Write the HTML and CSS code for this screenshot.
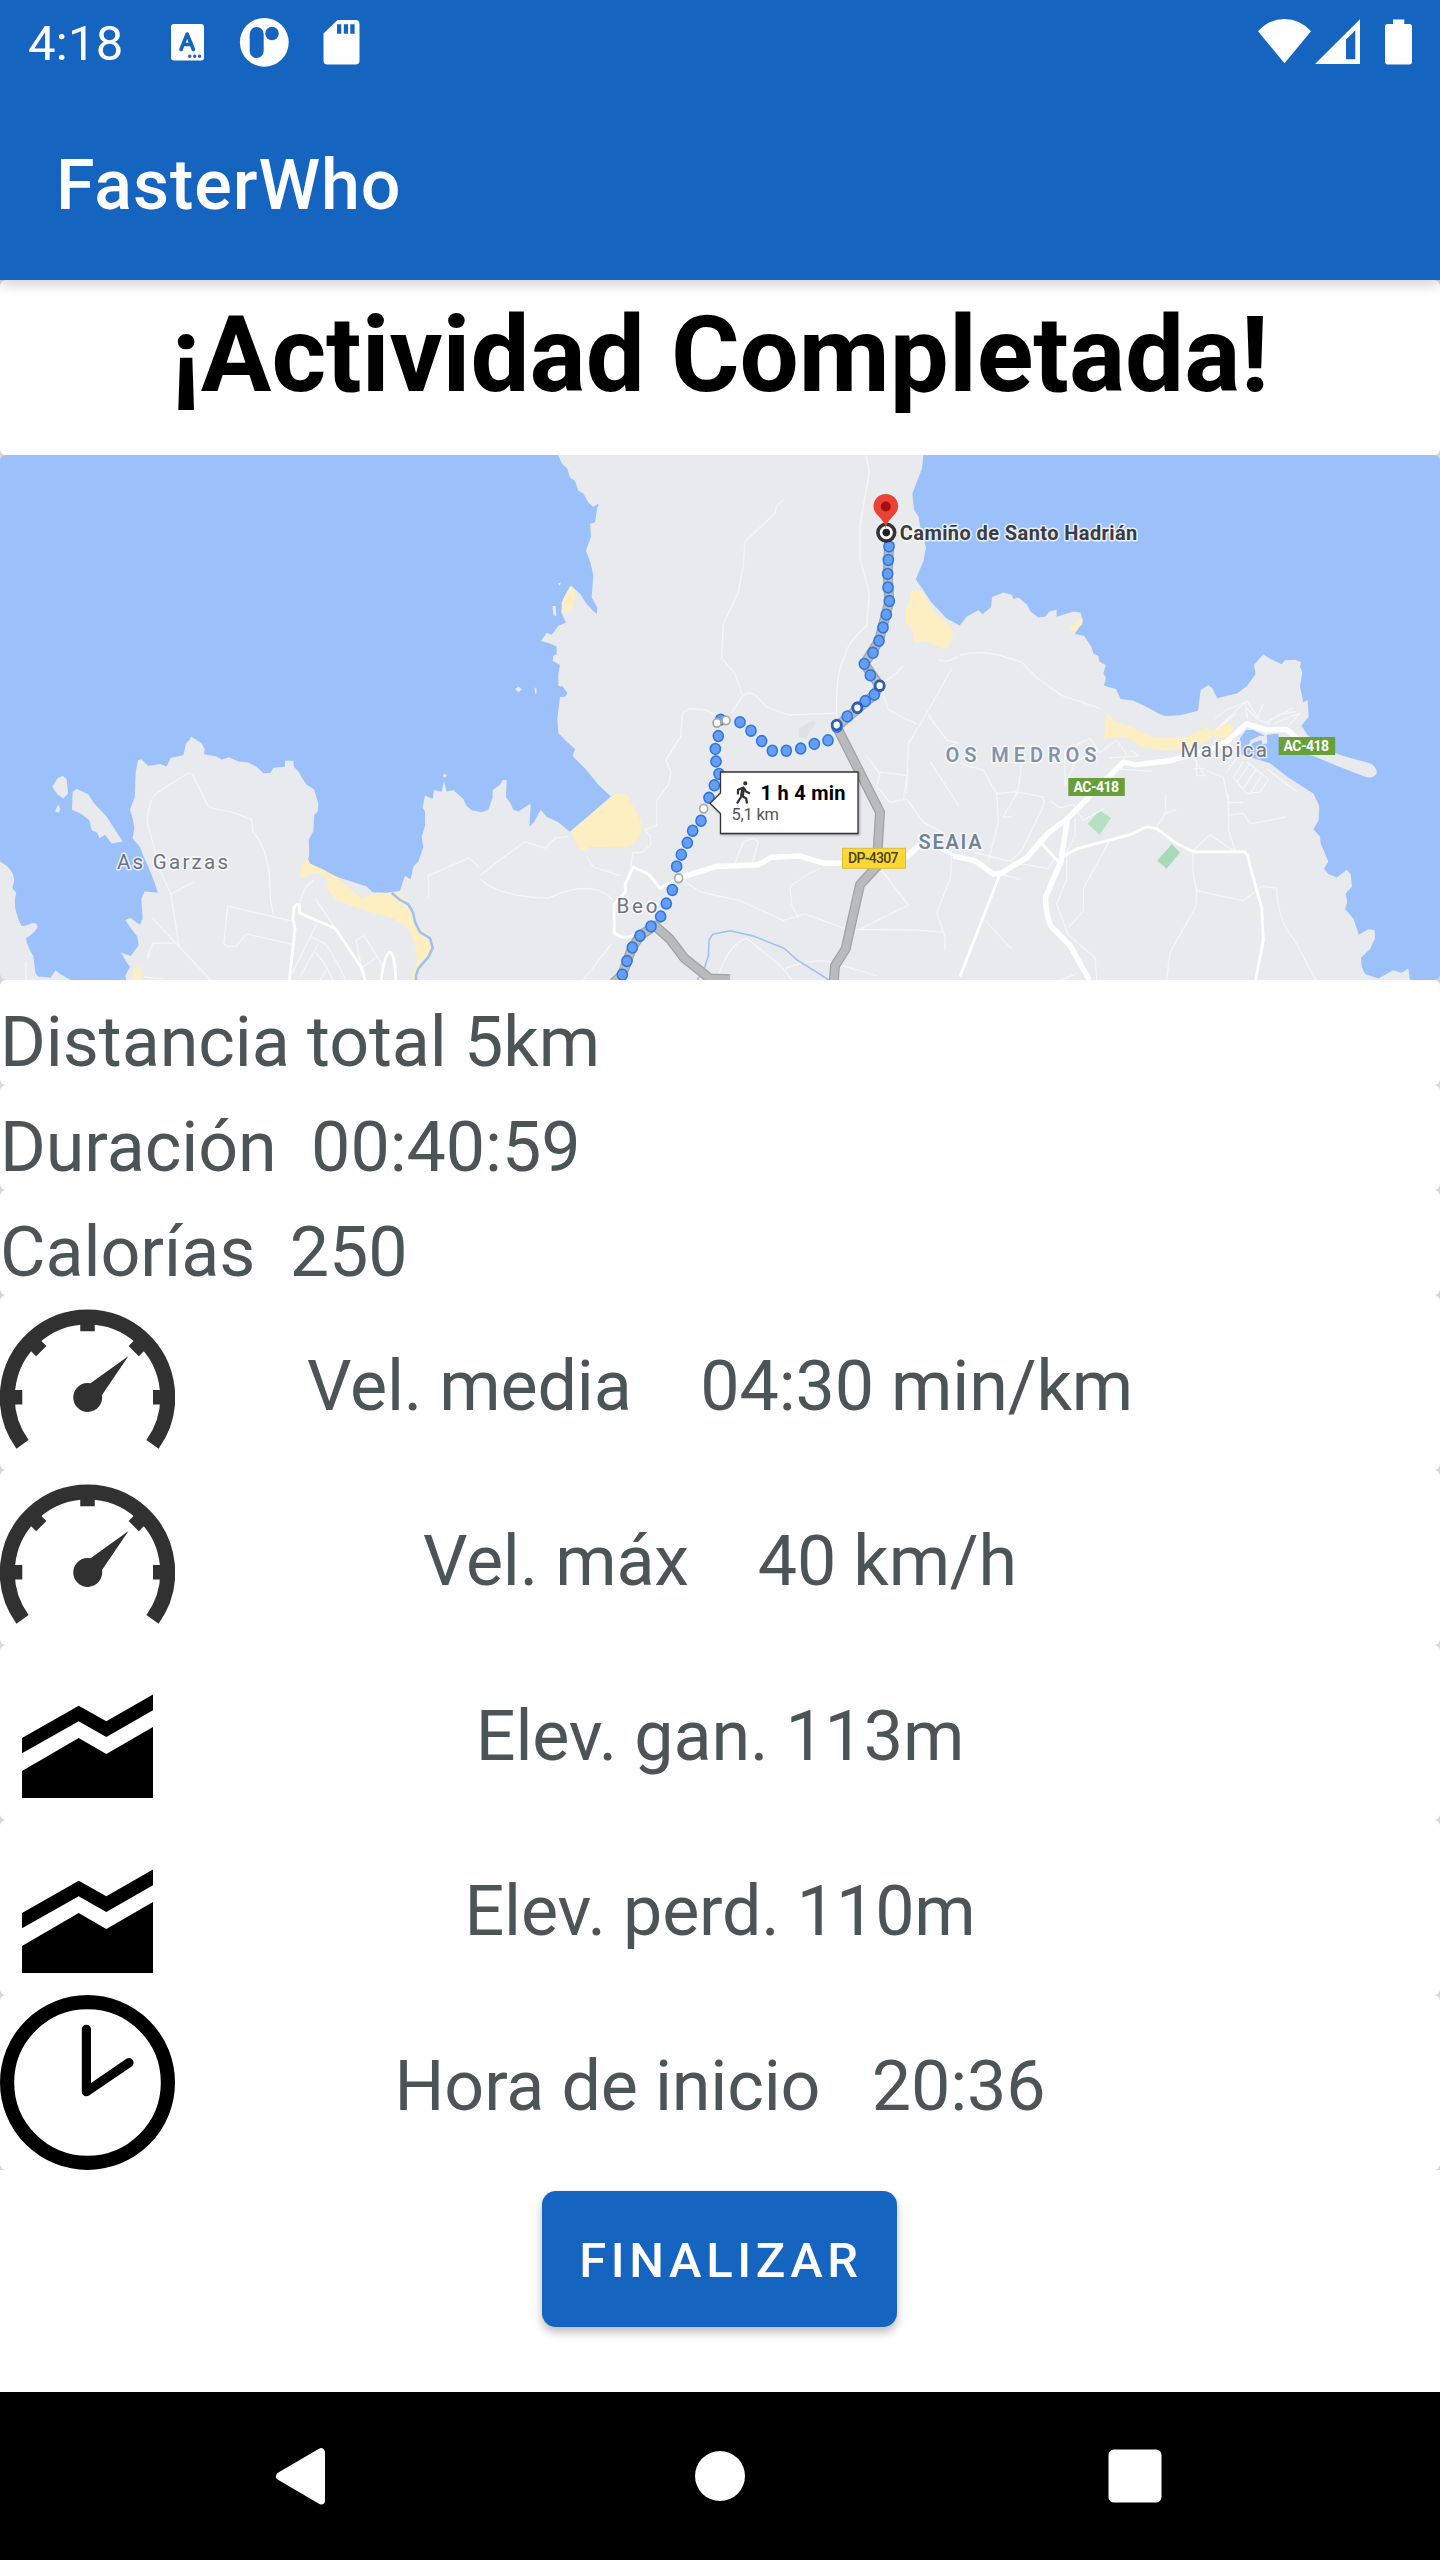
FILE: index.html
```html
<!DOCTYPE html>
<html lang="es">
<head>
<meta charset="utf-8">
<title>FasterWho</title>
<link rel="stylesheet" href="styles.css">
</head>
<body>
<div class="screen">
  <header class="top">
    <div class="status">
      <span class="time">4:18</span>
      <svg class="status-left" viewBox="160 0 200 84" width="200" height="84">
        <rect x="171" y="24" width="33" height="36.500" rx="3" fill="#fff"/>
        <path d="M181 49.500l6.200-15.500 6.200 15.500M183.500 44.500h7.500" fill="none" stroke="#1565c0" stroke-width="3.600" stroke-linecap="round" stroke-linejoin="round"/>
        <path d="M189.800 56.300h0M194.700 56.300h0M199.600 56.300h0" stroke="#1565c0" stroke-width="3.400" stroke-linecap="round"/>
        <circle cx="264.300" cy="42.300" r="24.400" fill="#fff"/>
        <rect x="249.700" y="27" width="14" height="31" rx="7" fill="#1565c0"/>
        <circle cx="272" cy="33.500" r="6.800" fill="#1565c0"/>
        <path d="M337.500 20h18q4 0 4 4v36.500q0 4-4 4h-28q-4 0-4-4V33.500z" fill="#fff"/>
        <path d="M337 24.300h4.300v9.500H337zM343.800 24.300h4.300v9.500h-4.300zM350.300 24.300h4.300v9.500h-4.300z" fill="#1565c0"/>
      </svg>
      <svg class="status-right" viewBox="1250 0 170 84" width="170" height="84">
        <path d="M1258 31.300Q1269 19 1284.500 19T1311 31.300L1284.500 63.300z" fill="#fff"/>
        <path fill-rule="evenodd" d="M1315 64L1360 19.300V64zM1346 39.500V59.300h9.300V30.500z" fill="#fff"/>
        <path d="M1393 19.500h11.300V24h5q2.700 0 2.700 2.700v35q0 2.700-2.700 2.700h-21.600q-2.700 0-2.700-2.700v-35q0-2.700 2.700-2.700h5.300z" fill="#fff"/>
      </svg>
    </div>
    <div class="appbar">FasterWho</div>
  </header>

  <main class="cards">
    <section class="card title-card"><h1>¡Actividad Completada!</h1></section>

    <section class="card map-card">
      <svg class="map" viewBox="0 455 1440 525" width="1440" height="525">
        <defs>
          <path id="dots" d="M1227 298h0M1225 336h0M1223 375h0M1224 413h0M1228 451h0M1219 489h0M1209 525h0M1197 562h0M1179 596h0M1153 627h0M1171 659h0M1199 688h0M1183 713h0M1156 731h0M1132 750h0M1102 774h0M1071 803h0M1044 841h0M1003 851h0M962 864h0M919 870h0M877 870h0M845 843h0M813 814h0M780 790h0M722 783h0M715 829h0M706 865h0M708 900h0M717 935h0M703 967h0M687 1002h0M663 1066h0M638 1094h0M622 1128h0M604 1161h0M590 1194h0M577 1260h0M559 1298h0M542 1334h0M513 1362h0M480 1388h0M457 1421h0M441 1459h0M427 1497h0"/>
          <path id="stops" d="M738 785h0M711 792h0M671 1032h0M596 1227h0"/>
          <path id="turns" d="M1199 688h0M1132 750h0M1070 798h0"/>
        </defs>
        <g class="geo" transform="translate(0 440) scale(.333333 .357143)">
          <!-- west -->
          <g>
            <path class="land" d="M0 1180L20 1192Q45 1215 42 1235L37 1255 49 1268Q35 1305 64 1360Q75 1364 94 1353Q115 1350 112 1365Q105 1380 78 1395Q80 1415 100 1445L106 1490Q110 1504 125 1503L152 1505 167 1485 180 1495 212 1512H0z"/>
            <path class="land" d="M157 971L172 948 188 940 200 950 204 990 190 1004 172 992zM175 1020L181 1035 176 1044 165 1040zM216 1035L218 985 230 977 265 992 280 1015 320 1055 368 1124 335 1130 315 1105 298 1115 292 1100 275 1093 268 1065 245 1048z"/>
            <path class="land" d="M379 1512L376 1500 390 1475 378 1460 363 1435 392 1445 416 1415 412 1390 395 1370 376 1345 390 1338 420 1357 428 1340 424 1285 434 1264 474 1268 462 1235 445 1195 430 1165 420 1140 398 1115 403 1085 398 1060 390 1035 404 1000 407 930 414 897 424 894 445 913 480 907 500 914 512 890 550 883 558 850 569 840 573 830 605 850 614 865 612 880 650 886 665 895 686 888 715 900 745 903 770 915 790 933 812 932 820 918 855 915 855 898 880 898 882 915 897 930 905 945 920 965 942 978 955 1018 953 1040 943 1050 940 1095 926 1120 928 1160 922 1185 960 1200 1000 1220 1100 1250 1118 1266 1160 1268 1200 1262 1215 1220 1232 1230 1240 1195 1255 1180 1270 1140 1265 1110 1275 1080 1275 1040 1268 1030 1275 995 1298 1005 1302 980 1325 985 1332 955 1340 985 1360 980 1390 1005 1400 1025 1415 1037 1445 1042V1512z"/>
            <circle class="land" cx="1334" cy="940" r="5"/>
            <path class="sand" d="M899 1223L907 1190 922 1168 930 1186 968 1202 1010 1223 1085 1285 1120 1271 1200 1266 1212 1280 1213 1292 1235 1310 1245 1350 1292 1395 1298 1420 1290 1445 1250 1485 1250 1512H1230L1252 1460 1245 1410 1222 1365 1180 1340 1090 1315 1010 1288 980 1255 985 1235 965 1215 940 1212 910 1225zM395 1512L402 1480 422 1472 425 1512z"/>
            <path class="stream" d="M1175 1268L1200 1288 1225 1300 1240 1325 1245 1350 1260 1378 1290 1395 1298 1422 1285 1448 1255 1480 1248 1500V1512"/>
            <path class="lane" d="M537 1418L513 1272 480 1205 442 1070Q445 1010 470 988L560 935Q575 930 580 940L622 1022Q628 1032 690 1040L755 1062 758 1095Q800 1140 808 1220L812 1290 820 1330M513 1272L580 1238M458 1340L537 1418 632 1512M442 1452L458 1409H530M432 1503L490 1509M683 1305L880 1348M683 1305L672 1410 680 1418H708L740 1383 880 1413M940 1233Q905 1255 898 1310M947 1285L1006 1368M875 1495L950 1355M930 1390L975 1410Q995 1430 1037 1512M900 1503L955 1410M945 1435Q975 1460 998 1512M960 1512L982 1480M1068 1400L1092 1388 1132 1447 1085 1478zM1132 1447L1150 1475M1285 1280V1220L1408 1170 1440 1200M78 1460V1512"/>
            <path class="road" d="M868 1512L885 1370 879 1340 882 1310Q890 1295 898 1303L900 1325 1006 1368 1085 1478 1095 1512M1143 1512Q1155 1435 1170 1434Q1185 1440 1187 1512"/>
          </g>
          <!-- centre -->
          <g transform="translate(1440 0)">
            <path class="land" d="M-4 1045L25 1035 38 1000 38 980 60 965 68 952 80 952 78 1000 90 1015 100 1035 115 1040 152 1018 148 1082 162 1070 182 1035 200 1055 235 1070 270 1097 393 998 355 965 320 925 278 885 285 865 255 840 235 820 232 780 240 720 257 718 262 708 248 690 235 688 235 655 240 630 218 618 220 605 230 600 230 578 210 570 183 563 200 540 215 545 235 520 258 512 245 485 245 455 258 430 272 408 300 430 320 460 350 488 352 470 335 440 340 380 332 345 318 310 333 270 330 235 345 230 352 190 357 178 340 187 325 175 310 150 295 142 285 115 270 105 262 80 245 65 235 42H1330L1326 80 1297 150 1302 195 1316 215 1320 240 1338 300 1330 340 1307 390 1330 420 1350 450 1400 500 1445 522V1512H-4z"/>
            <path class="land" d="M105 697L116 690 125 698 116 706zM163 693l6 2 1 14-4 2zM234 402l8-3-2 10zM217 465l10 0 2 28-8-2z"/>
            <path class="sand" d="M272 408L288 422 278 470 262 482 244 482 250 445zM272 1097L393 1000 415 988 438 990 468 1040 488 1080Q480 1125 440 1140H380L328 1138 316 1152 300 1145zM1292 425Q1315 415 1330 428L1365 485 1410 520 1420 545 1405 580 1390 585 1340 562 1302 567 1302 538 1278 510 1275 480 1290 450z"/>
            <path fill="#dfe1e4" d="M955 808L1000 785 1010 792 990 815 978 838 958 833z"/>
            <path class="lane" d="M910 167L890 185 885 205 795 285 790 350 775 425 730 515 725 610 765 655 788 715 755 765M1158 42L1168 90 1140 240 1140 330 1168 430 1160 520Q1100 570 1095 605 1065 650 1070 780M785 718Q810 700 830 718L860 748 925 770 1070 765M745 795L680 757 628 752 608 765 602 830 558 895 573 930 565 965 530 1010V1080L495 1090 512 1110V1135L485 1155H458L452 1200M1270 632L1240 660 1200 685 1225 755 1270 778 1310 795M0 1220L60 1175 135 1125 195 1143 225 1115 265 1110M0 1230Q60 1280 205 1283Q340 1225 400 1290M320 1165L340 1195 420 1220M395 1410L310 1512M765 1185L790 1125 820 1115 835 1125 815 1190M605 1230L660 1265 780 1290 910 1345 975 1327 1100 1370 1300 1372 1390 1378M1020 1200L985 1215 930 1250 935 1300 955 1340M1205 1205L1285 1302 1140 1370M712 1512Q740 1415 800 1395L905 1475 935 1510M915 1480Q1000 1450 1050 1462L1190 1500M1440 605L1400 620 1375 615M1415 640L1340 765 1285 850 1280 990M1345 770L1400 840 1440 850M1160 885L1200 935 1190 970 1230 1015 1280 1005 1330 1070 1390 1100M1200 930L1280 940 1270 1010M1415 1150L1412 1225 1370 1325 1395 1390V1430M1350 900L1440 1030"/>
            <path class="stream thin" d="M652 1512L672 1482 685 1445 687 1400 698 1384 750 1374 820 1389 912 1423 950 1455 1047 1512"/>
            <path class="road" d="M596 1227L540 1255 505 1215 460 1196 452 1210 435 1245 437 1265 402 1300 403 1380Q430 1400 455 1388L513 1362M1380 1145L1440 1170"/>
            <path class="main-road" d="M596 1227L710 1194 835 1189 875 1168 960 1165 1030 1185H1086M1277 1170L1320 1133"/>
            <g class="trail">
              <path d="M1228 285L1223 375 1228 451 1197 562 1153 627 1199 688 1183 713 1070 803 1200 1042 1190 1195 1140 1245 1097 1425 1065 1472 1061 1520M400 1520L427 1497 441 1459 457 1421 480 1388 525 1360 570 1398 612 1450 690 1508 750 1510"/>
              <path class="trail-core" d="M1228 285L1223 375 1228 451 1197 562 1153 627 1199 688 1183 713 1070 803 1200 1042 1190 1195 1140 1245 1097 1425 1065 1472 1061 1520M400 1520L427 1497 441 1459 457 1421 480 1388 525 1360 570 1398 612 1450 690 1508 750 1510"/>
            </g>
          </g>
          <!-- east -->
          <g transform="translate(2880 0)">
            <path class="land" d="M-4 523L20 495 55 477 68 487 93 468 96 440 130 427 155 433 160 445 175 441 200 460 212 480 235 497 255 495 268 480 290 475 290 495 340 480 362 484 368 508 345 543 372 548 395 580 400 598 415 605 418 620 437 630 430 655 438 665 432 688 468 697 482 725 520 730 550 743 600 768 615 773 660 771 714 758 722 700 745 687 757 695 772 723 800 716 830 710 860 690 887 655 882 630 910 600 925 610 965 628 975 617 1005 615 1024 622 1020 635 1027 650 1020 690 1030 735 1043 728 1046 775 1024 800 1042 825 1095 865 1150 885 1230 905Q1252 915 1250 935 1235 950 1215 943L1130 912 1060 885 960 860 955 822 920 826 922 850 907 852 904 840 880 848 864 860 872 840 900 828 915 828 880 812 858 812 840 835 845 880 930 905 985 945 1060 990 1078 1025 1076 1065 1060 1090 1080 1110 1082 1130 1105 1180 1092 1200 1105 1215 1130 1225 1160 1203 1172 1215 1176 1250 1157 1270 1162 1295 1155 1313 1180 1340 1197 1385 1225 1370 1244 1372 1245 1395 1230 1425 1203 1450 1205 1475 1215 1495 1255 1508 1300 1485 1325 1492 1345 1480 1350 1512H-4z"/>
            <path class="sand" d="M328 530L345 513 358 497 368 500 366 517 340 537zM440 765L453 775 458 787 510 802 580 832 680 833 738 803 752 812 755 835 700 862 620 870 540 858 500 830 432 835zM755 815L800 790 822 803 805 835 765 835z"/>
            <path fill="#b5e0c2" d="M384 1075L418 1037 453 1058 419 1106z"/>
            <path fill="#a8dab5" d="M591 1178L635 1132 660 1155 620 1200z"/>
            <path class="lane" d="M0 602Q60 588 120 603L185 622 230 665 305 715 422 752M0 905L70 925 110 990 115 1070 85 1180M110 990L170 985 250 1000 252 1020 185 1150 150 1180 45 1155M182 910Q180 970 170 990L130 1055H155M315 970V870L390 835 420 875 470 840 500 880M315 970L345 900 400 880M270 1010L300 1030 340 1020 370 1065 435 1030M345 1060V1110L320 1150 320 1230 290 1300 325 1385 405 1450 410 1512M450 1120L370 1255 370 1320 325 1365M150 1180L265 1200 285 1170M617 990V1045L585 1090M610 1047L650 1035M700 1155Q695 1210 710 1262L708 1305 630 1435 620 1512M710 1262L850 1290 905 1250 950 1255Q955 1350 1000 1395L1068 1512M700 1150L750 1105 820 1150M805 990L805 1090 825 1150 860 1150M800 1015H850M805 1050L850 1045 870 1075 980 1055M765 780L800 755 855 735 862 780M780 800L860 730 900 785 930 795M770 810L830 765M860 750L890 780 910 740M920 790L1000 750M940 795L1020 765 985 800M950 770L1010 760M700 890L735 940H710V895M735 920H700M740 925L790 945 805 1015M830 890L800 930M850 900L820 945 860 990 900 985 925 950M870 905L830 960M890 920L850 975M905 940L870 990M860 900L925 950M920 920L1010 985M450 890L535 885 515 870M460 920L575 928M70 1340L155 1425M120 1215L180 1230M300 1512L350 1495"/>
            <path class="road" d="M120 1215L0 1502M245 1130L295 1180M310 1165L350 1145 510 1105 560 1083 590 1088 650 1130 700 1153H850Q865 1158 868 1185L905 1310 910 1400 887 1512"/>
            <path class="main-road" d="M-20 1165L45 1178 100 1215 125 1212 200 1170 265 1100 325 1058 490 902 525 909 630 898 740 870 800 845 860 795 920 812 980 810 1030 850M322 1060L303 1180 257 1280Q255 1320 272 1360L330 1415 388 1512"/>
          </g>
          <g transform="translate(1440 0)">
            <use href="#dots" class="dot-edge"/>
            <use href="#dots" class="dot-fill"/>
            <use href="#turns" class="turn-edge"/>
            <use href="#turns" class="dot-white"/>
            <use href="#stops" class="stop-edge"/>
            <use href="#stops" class="dot-white"/>
          </g>
        </g>

        <circle cx="886.300" cy="526.600" r="0" fill="none"/>
        <circle cx="886.300" cy="532.600" r="8.400" fill="#fff" stroke="#333" stroke-width="3.600"/>
        <circle cx="886.300" cy="532.600" r="3.800" fill="#222"/>
        <path d="M885.700 528.500C884.500 518 873.500 515.500 873.500 506.300A12.300 12.300 0 0 1 898.100 506.300C898.100 515.500 887 518 885.700 528.500z" fill="#ea4335"/>
        <circle cx="885.800" cy="506.500" r="5" fill="#a50e0e"/>

        <g class="labels">
          <text class="halo place" x="899.800" y="540" textLength="237.500">Camiño de Santo Hadrián</text>
          <text class="halo town" x="117" y="868.500" textLength="111">As Garzas</text>
          <text class="halo town" x="616.500" y="913" textLength="41">Beo</text>
          <text class="halo town" x="1180.500" y="756.500" textLength="86.500">Malpica</text>
          <text class="halo area" x="945.500" y="762" textLength="151">OS MEDROS</text>
          <text class="halo area seaia" x="918.500" y="849" textLength="63">SEAIA</text>
          <rect x="1068.300" y="778" width="56.500" height="18" fill="#689f38"/>
          <text class="shield" x="1073.500" y="792" textLength="45.500">AC-418</text>
          <rect x="1278.700" y="737" width="56.500" height="18" fill="#689f38"/>
          <text class="shield" x="1283.500" y="750.800" textLength="45.500">AC-418</text>
          <rect x="842.500" y="848.300" width="63" height="20" fill="#fdd835" stroke="#d9bd3c"/>
          <text class="shield dark" x="848" y="863.200" textLength="50.500">DP-4307</text>
        </g>

        <path class="tip" d="M720.500 772H858V833.500H720.500V813.500L710 803.200 720.500 793z"/>
        <g fill="none" stroke="#333" stroke-width="2.300" stroke-linejoin="round">
          <circle cx="745.300" cy="783.300" r="1.300" fill="#333" stroke-width="1.600"/>
          <path d="M738 794.500V789.800L743.500 787.500 746 791.500 750 793.500M743 788L741.300 796.500 737 803.500M741.300 795.500L746.200 798.500 747 803.500" />
          <path d="M743.300 788L742 796" stroke-width="3.800"/>
        </g>
        <text class="tip-time" x="760.500" y="799.600" textLength="85">1 h 4 min</text>
        <text class="tip-dist" x="731.500" y="819.600" textLength="47.500">5,1 km</text>
      </svg>
    </section>

    <section class="card line">Distancia total 5km</section>
    <section class="card line">Duración  00:40:59</section>
    <section class="card line">Calorías  250</section>

    <section class="card stat">
      <svg viewBox="0 0 175 175" width="175" height="175"><use href="#gauge"/></svg>
      <span>Vel. media    04:30 min/km</span>
    </section>
    <section class="card stat">
      <svg viewBox="0 0 175 175" width="175" height="175">
        <g id="gauge">
          <path d="M22.500 149.300A80.200 80.200 0 1 1 152.500 149.300" fill="none" stroke="#313131" stroke-width="15"/>
          <path d="M14 102.300H22.300M153 102.300H161M87.500 26V36.300M31 45.800L41.300 56.100M144 45.800L133.700 56.100" stroke="#313131" stroke-width="14.500"/>
          <path d="M128.500 61L90.500 88.200A14.500 14.500 0 1 0 102 100z" fill="#313131"/>
        </g>
      </svg>
      <span>Vel. máx    40 km/h</span>
    </section>
    <section class="card stat">
      <svg viewBox="0 0 175 175" width="175" height="175">
        <g id="chart">
          <path d="M22 93.100L78.700 60.800 106.300 76.300 153 49.400V65.300L106.300 92.100 78.700 76.300 22 108.300zM22 125.900L78.700 93.100 106.300 109 153 82.100V153H22z"/>
        </g>
      </svg>
      <span>Elev. gan. 113m</span>
    </section>
    <section class="card stat">
      <svg viewBox="0 0 175 175" width="175" height="175"><use href="#chart"/></svg>
      <span>Elev. perd. 110m</span>
    </section>
    <section class="card stat">
      <svg viewBox="0 0 175 175" width="175" height="175" fill="none" stroke="#000">
        <circle cx="87.500" cy="87.500" r="80.400" stroke-width="14.200"/>
        <path d="M86.400 34.300V96.700L129 67.600" stroke-width="9.200" stroke-linecap="round" stroke-linejoin="round"/>
      </svg>
      <span>Hora de inicio   20:36</span>
    </section>
  </main>

  <div class="actions"><button class="finish">FINALIZAR</button></div>

  <nav class="navbar">
    <svg viewBox="0 0 1440 168" width="1440" height="168" fill="#fff">
      <path d="M280 84.300L321 60.200V108.400z" stroke="#fff" stroke-width="8" stroke-linejoin="round"/>
      <circle cx="720" cy="84" r="25"/>
      <rect x="1108.500" y="57.500" width="53" height="53" rx="5.500"/>
    </svg>
  </nav>
</div>
</body>
</html>
```
FILE: styles.css
```css
* { box-sizing: border-box; }

body {
  margin: 0;
  background: #fff;
  font-family: Roboto, "Liberation Sans", sans-serif;
}

svg { display: block; }

.screen {
  display: flex;
  flex-direction: column;
  width: 1440px;
  height: 2560px;
  overflow: hidden;
}

.top {
  position: relative;
  z-index: 1;
  height: 280px;
  background: #1565c0;
  color: #fff;
  box-shadow: 0 3px 14px rgba(0, 0, 0, .22);
}

.status {
  display: flex;
  align-items: center;
  height: 84px;
  padding: 0 20px 0 28px;
}

.time {
  width: 132px;
  padding-top: 3px;
  font-size: 49px;
  letter-spacing: .3px;
}

.status-right { margin-left: auto; }

.appbar {
  display: flex;
  align-items: center;
  height: 196px;
  padding: 6px 56px 0;
  font-size: 70px;
  font-weight: 500;
  letter-spacing: .95px;
}

.cards { background: #d6d6d6; }

.card {
  overflow: hidden;
  border-radius: 6px;
  background: #fff;
}

.title-card {
  height: 175px;
  text-align: center;
}

h1 {
  margin: 0;
  padding-top: 14px;
  font-size: 105px;
  line-height: 123px;
  font-weight: 700;
}

.map-card {
  height: 525px;
  background: #9cc0fa;
}

.line,
.stat {
  color: #4c5556;
  font-size: 70px;
  line-height: 82px;
  letter-spacing: -.08px;
  white-space: pre;
}

.line {
  height: 105px;
  padding-top: 21px;
}

.stat {
  display: grid;
  grid-template-columns: 175px 1fr 175px;
  height: 175px;
  letter-spacing: -.16px;
}

.stat span {
  padding-top: 50px;
  text-align: center;
}

.actions {
  display: flex;
  flex: 1;
  justify-content: center;
  align-items: flex-start;
  padding: 21px 1px 0 0;
}

.finish {
  width: 355px;
  height: 136px;
  padding: 3px 0 0 3px;
  border: 0;
  border-radius: 14px;
  background: #1565c0;
  color: #fff;
  font: 500 49px Roboto, sans-serif;
  letter-spacing: 4.600px;
  box-shadow: 0 5px 10px rgba(0, 0, 0, .28);
}

.navbar {
  height: 168px;
  background: #000;
}

/* Map */
.geo path { vector-effect: non-scaling-stroke; }

.land { fill: #e8eaed; }
.sand { fill: #feefc3; }

.lane,
.road,
.main-road,
.stream,
.trail path {
  fill: none;
  stroke: #fff;
  stroke-linejoin: round;
}

.lane { stroke: #f5f6f7; stroke-width: 1.3px; }
.road { stroke-width: 2.8px; }
.main-road { stroke-width: 5.5px; }
.stream { stroke: #9cc0fa; stroke-width: 2.5px; }
.stream.thin { stroke-width: 1.5px; }
.trail path { stroke: #a0a2a4; stroke-width: 10px; }
.trail .trail-core { stroke: #b8babc; stroke-width: 7.5px; }

.geo use {
  fill: none;
  stroke-linecap: round;
}

/* Route markers are measured in the map's own units, about a third of a pixel */
.dot-edge { stroke: #2f76dd; stroke-width: 35px; }
.dot-fill { stroke: #669df6; stroke-width: 26px; }
.turn-edge { stroke: #2c5fb3; stroke-width: 35px; }
.stop-edge { stroke: #a8a8a8; stroke-width: 29px; }
.dot-white { stroke: #fff; stroke-width: 19px; }

.halo {
  paint-order: stroke;
  stroke: rgba(255, 255, 255, .75);
  stroke-width: 3px;
  stroke-linejoin: round;
}

.place { fill: #3c3c3c; font-size: 20px; font-weight: 700; }
.town { fill: #6b7280; font-size: 20.500px; font-weight: 400; }
.area { fill: #8093ae; font-size: 20px; font-weight: 600; }
.seaia { fill: #718496; }
.shield { fill: #fff; font-size: 14px; font-weight: 700; }
.dark { fill: #4b431d; font-weight: 500; }

.tip {
  fill: #fff;
  stroke: #333;
  stroke-width: 1.3px;
  filter: drop-shadow(1.5px 1.5px 1px rgba(0, 0, 0, .3));
}

.tip-time { fill: #000; font-size: 20px; font-weight: 700; }
.tip-dist { fill: #555; font-size: 16.500px; }
```
